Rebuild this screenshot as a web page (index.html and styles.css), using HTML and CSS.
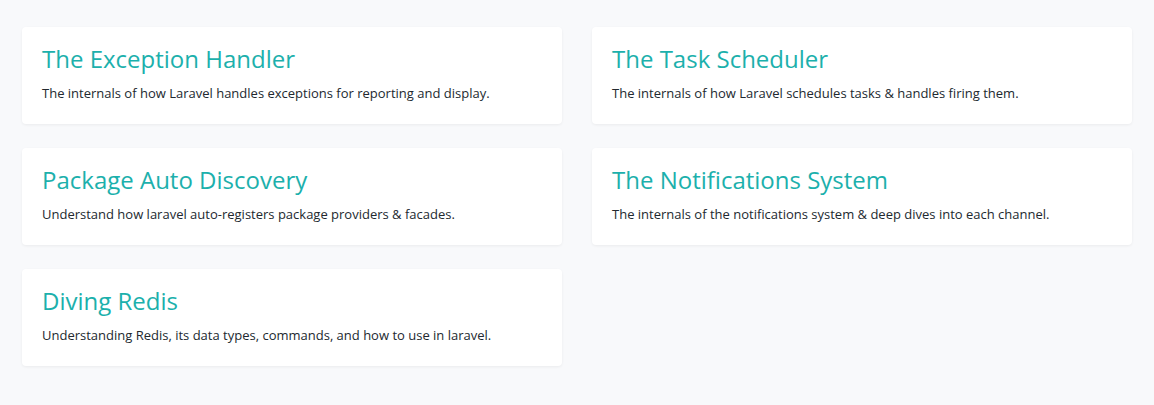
FILE: index.html
```html
<!DOCTYPE html>
<html>
<head>
<meta charset="utf-8">
<link rel="stylesheet" href="styles.css">
</head>
<body>
<div class="grid">
  <div class="card">
    <h2 class="title">The Exception Handler</h2>
    <p class="desc">The internals of how Laravel handles exceptions for reporting and display.</p>
  </div>
  <div class="card">
    <h2 class="title">The Task Scheduler</h2>
    <p class="desc">The internals of how Laravel schedules tasks &amp; handles firing them.</p>
  </div>
  <div class="card">
    <h2 class="title">Package Auto Discovery</h2>
    <p class="desc">Understand how laravel auto-registers package providers &amp; facades.</p>
  </div>
  <div class="card">
    <h2 class="title">The Notifications System</h2>
    <p class="desc">The internals of the notifications system &amp; deep dives into each channel.</p>
  </div>
  <div class="card">
    <h2 class="title">Diving Redis</h2>
    <p class="desc">Understanding Redis, its data types, commands, and how to use in laravel.</p>
  </div>
</div>
</body>
</html>
```

FILE: styles.css
```css
html, body {
  margin: 0;
  padding: 0;
  background: #f8f9fb;
  font-family: "Open Sans", "Liberation Sans", sans-serif;
}
.grid {
  display: grid;
  grid-template-columns: 540px 540px;
  column-gap: 30px;
  row-gap: 24px;
  padding: 27px 22px;
}
.card {
  background: #fff;
  border-radius: 4px;
  box-shadow: 0 1px 3px rgba(0, 0, 0, 0.06);
  height: 97px;
  box-sizing: border-box;
  padding: 16px 20px 0;
}
.title {
  margin: 0;
  font-size: 24px;
  font-weight: 400;
  line-height: 32px;
  color: #1cb0ac;
}
.desc {
  margin: 8px 0 0;
  font-size: 13px;
  line-height: 20px;
  color: #22292f;
}
```
